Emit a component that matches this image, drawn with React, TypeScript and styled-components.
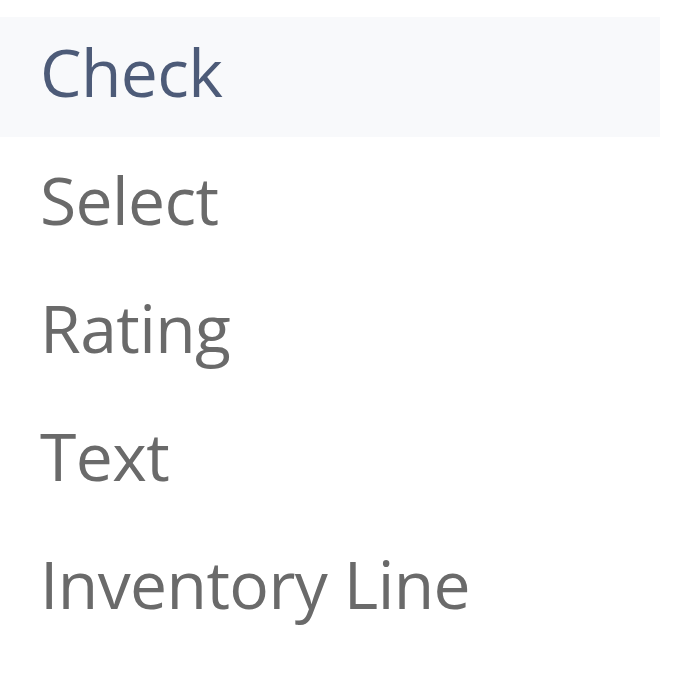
import React from 'react';
import styled, { createGlobalStyle } from 'styled-components';

const GlobalStyle = createGlobalStyle`
  body {
    margin: 0;
    background: #ffffff;
    font-family: "Open Sans", "Noto Sans", sans-serif;
  }
`;

const Menu = styled.ul`
  list-style: none;
  margin: 0;
  padding: 17px 0 0;
  width: 660px;
  display: flex;
  flex-direction: column;
  gap: 8px;
`;

const Item = styled.li<{ active?: boolean }>`
  height: 120px;
  box-sizing: border-box;
  display: flex;
  align-items: center;
  padding: 0 0 12px 40px;
  font-size: 66px;
  font-weight: 400;
  letter-spacing: -0.6px;
  color: ${props => (props.active === true ? '#4d5b78' : '#6a6a6a')};
  background: ${props => (props.active === true ? '#f8f9fb' : 'transparent')};
`;

const items = ['Check', 'Select', 'Rating', 'Text', 'Inventory Line'];

const App: React.FC = () => {
  return (
    <>
      <GlobalStyle />
      <Menu>
        {items.map((label, i) => (
          <Item key={label} active={i === 0}>
            {label}
          </Item>
        ))}
      </Menu>
    </>
  );
};

export default App;
